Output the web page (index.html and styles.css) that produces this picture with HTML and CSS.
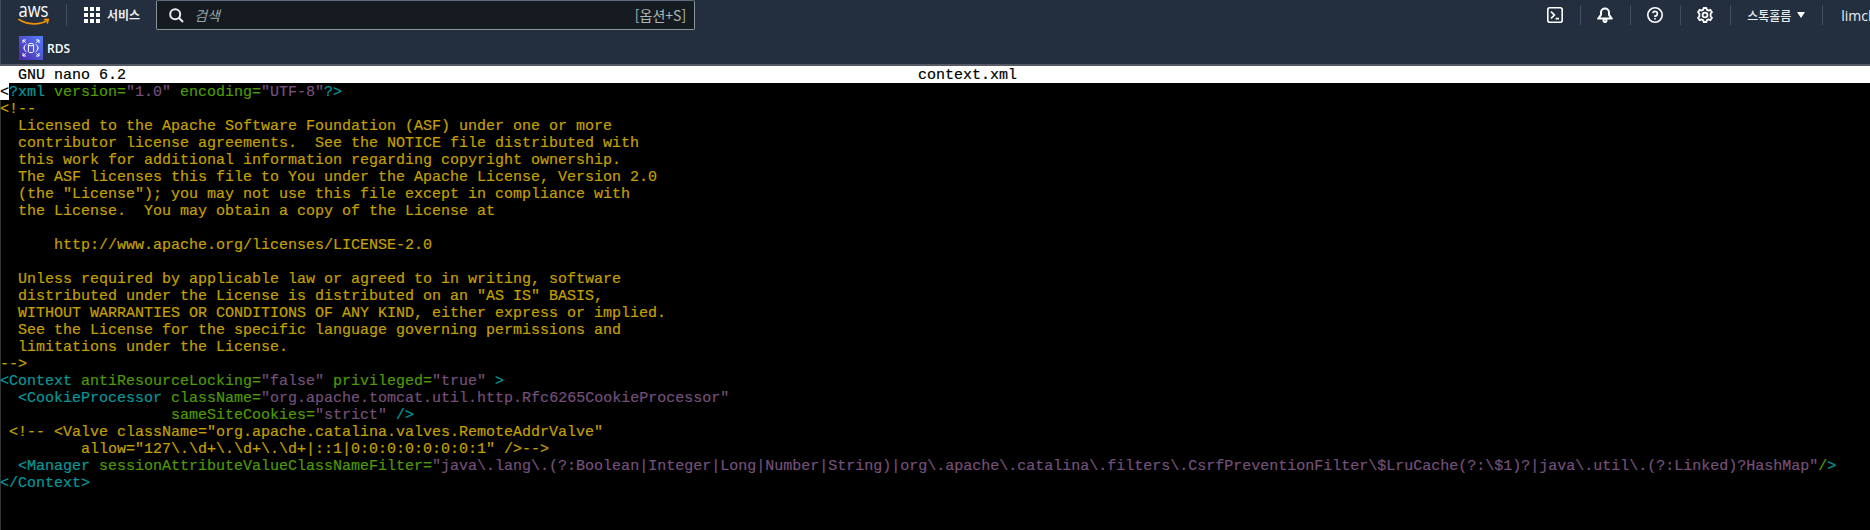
FILE: index.html
```html
<!DOCTYPE html>
<html lang="ko">
<head>
<meta charset="utf-8">
<title>context.xml - RDS</title>
<link rel="stylesheet" href="styles.css">
</head>
<body>
<header class="console-header">
  <div class="top-row">
    <svg class="aws-logo" width="32" height="21" viewBox="0 0 32 21" aria-label="aws">
      <text class="aws-text" x="0.5" y="11.5" textLength="30" lengthAdjust="spacingAndGlyphs">aws</text>
      <path d="M1 14.6C9 20 21.5 20.4 29 15.6" fill="none" stroke="#f29100" stroke-width="1.8" stroke-linecap="round"/>
      <path d="M25.8 14.6L30.4 14.2L29.2 18.6" fill="none" stroke="#f29100" stroke-width="1.5" stroke-linejoin="round"/>
    </svg>
    <span class="divider logo-divider"></span>
    <svg class="grid-icon" width="16" height="16" viewBox="0 0 16 16" fill="#fff">
      <rect width="4" height="4"/><rect x="6" width="4" height="4"/><rect x="12" width="4" height="4"/>
      <rect y="6" width="4" height="4"/><rect x="6" y="6" width="4" height="4"/><rect x="12" y="6" width="4" height="4"/>
      <rect y="12" width="4" height="4"/><rect x="6" y="12" width="4" height="4"/><rect x="12" y="12" width="4" height="4"/>
    </svg>
    <span class="services">서비스</span>
    <div class="search">
      <svg width="15" height="15" viewBox="0 0 15 15" fill="none" stroke="#e9ebed" stroke-width="2"><circle cx="6.2" cy="6.2" r="5"/><path d="M9.8 9.8L14 14"/></svg>
      <span class="search-placeholder">검색</span>
      <span class="search-key">[옵션+S]</span>
    </div>
    <nav class="tools">
      <svg width="16" height="16" viewBox="0 0 16 16" fill="none" stroke="#fff" stroke-width="1.6"><rect x=".8" y=".8" width="14.4" height="14.4" rx="2"/><path d="M4 4.6L7.4 8L4 11.4M8.6 11.6H12"/></svg>
      <span class="divider"></span>
      <svg width="16" height="16" viewBox="0 0 16 16" fill="none" stroke="#fff" stroke-width="2"><path d="M1.2 11.6H14.8L12 7.8V5.6A4 4 0 0 0 4 5.6V7.8Z" stroke-linejoin="round"/><circle cx="8" cy="13.6" r="1.5"/></svg>
      <span class="divider"></span>
      <svg width="16" height="16" viewBox="0 0 16 16" fill="none" stroke="#fff" stroke-width="1.6"><circle cx="8" cy="8" r="7.2"/><path d="M5.8 6.2A2.3 2.3 0 1 1 8 9V10"/><path d="M8 11V12.6"/></svg>
      <span class="divider"></span>
      <svg width="16" height="16" viewBox="0 0 16 16" fill="none" stroke="#fff" stroke-width="1.8"><circle cx="8" cy="8" r="2.4"/><path d="M6.6 1H9.4L9.9 2.9L11.6 3.6L13.3 2.7L15 5.2L13.6 6.6V9.4L15 10.8L13.3 13.3L11.6 12.4L9.9 13.1L9.4 15H6.6L6.1 13.1L4.4 12.4L2.7 13.3L1 10.8L2.4 9.4V6.6L1 5.2L2.7 2.7L4.4 3.6L6.1 2.9Z" stroke-linejoin="round"/></svg>
      <span class="divider"></span>
      <span class="region">스톡홀름</span>
      <svg class="caret" width="8" height="6" viewBox="0 0 8 6" fill="#fff"><path d="M0 0H8L4 6Z"/></svg>
      <span class="divider"></span>
      <span class="user">limchanho</span>
    </nav>
  </div>
  <div class="service-row">
    <svg width="24" height="24" viewBox="0 0 24 24">
      <defs><linearGradient id="rds" x1="0" y1="1" x2="1" y2="0"><stop offset="0" stop-color="#4d27a8"/><stop offset="1" stop-color="#527fff"/></linearGradient></defs>
      <rect width="24" height="24" fill="url(#rds)"/>
      <g fill="none" stroke="#fff" stroke-width="1">
        <ellipse cx="12" cy="8.6" rx="2.6" ry="1.2"/>
        <path d="M9.4 8.6V15.4C9.4 16.2 10.6 16.6 12 16.6S14.6 16.2 14.6 15.4V8.6"/>
        <path d="M7.4 8.2L5.4 10V11.6L4.4 12L5.4 12.4V14L7.4 15.8M16.6 8.2L18.6 10V11.6L19.6 12L18.6 12.4V14L16.6 15.8"/>
        <path d="M4 7V4H7M4 4L6.6 6.6M20 7V4H17M20 4L17.4 6.6M4 17V20H7M4 20L6.6 17.4M20 17V20H17M20 20L17.4 17.4"/>
      </g>
    </svg>
    <span class="service-name">RDS</span>
  </div>
</header>
<main class="terminal">
  <div class="nano-title"><span class="nano-version">GNU nano 6.2</span><span class="nano-file">context.xml</span></div>
  <pre class="nano-buffer"><span class="cursor">&lt;</span><span class="t">?xml</span><span class="g"> version=</span><span class="p">"1.0"</span><span class="g"> encoding=</span><span class="p">"UTF-8"</span><span class="t">?&gt;</span>
<span class="y">&lt;!--
  Licensed to the Apache Software Foundation (ASF) under one or more
  contributor license agreements.  See the NOTICE file distributed with
  this work for additional information regarding copyright ownership.
  The ASF licenses this file to You under the Apache License, Version 2.0
  (the "License"); you may not use this file except in compliance with
  the License.  You may obtain a copy of the License at

      http://www.apache.org/licenses/LICENSE-2.0

  Unless required by applicable law or agreed to in writing, software
  distributed under the License is distributed on an "AS IS" BASIS,
  WITHOUT WARRANTIES OR CONDITIONS OF ANY KIND, either express or implied.
  See the License for the specific language governing permissions and
  limitations under the License.
--&gt;</span>
<span class="t">&lt;Context</span><span class="g"> antiResourceLocking=</span><span class="p">"false"</span><span class="g"> privileged=</span><span class="p">"true"</span><span class="t"> &gt;</span>
  <span class="t">&lt;CookieProcessor</span><span class="g"> className=</span><span class="p">"org.apache.tomcat.util.http.Rfc6265CookieProcessor"</span>
                   <span class="g">sameSiteCookies=</span><span class="p">"strict"</span><span class="t"> /&gt;</span>
<span class="y"> &lt;!-- &lt;Valve className="org.apache.catalina.valves.RemoteAddrValve"
         allow="127\.\d+\.\d+\.\d+|::1|0:0:0:0:0:0:0:1" /&gt;--&gt;</span>
  <span class="t">&lt;Manager</span><span class="g"> sessionAttributeValueClassNameFilter=</span><span class="p">"java\.lang\.(?:Boolean|Integer|Long|Number|String)|org\.apache\.catalina\.filters\.CsrfPreventionFilter\$LruCache(?:\$1)?|java\.util\.(?:Linked)?HashMap"</span><span class="g">/</span><span class="t">&gt;</span>
<span class="t">&lt;/Context&gt;</span></pre>
</main>
</body>
</html>
```
FILE: styles.css
```css
html, body {
  margin: 0;
  padding: 0;
  height: 530px;
  overflow: hidden;
  background: #000;
}

.console-header {
  height: 64px;
  background: #232f3e;
  border-bottom: 2px solid #545b64;
  box-shadow: inset 1px 0 0 #414d5c;
  font-family: "Open Sans", "Noto Sans CJK KR", sans-serif;
  color: #fff;
}

.top-row {
  display: flex;
  align-items: center;
  height: 32px;
  padding-left: 18px;
}

.aws-logo { flex: none; margin-top: -2px; overflow: visible; }
.aws-text { font: 400 20px "Open Sans", sans-serif; fill: #fff; }

.divider {
  flex: none;
  width: 1px;
  height: 22px;
  background: #414d5c;
  margin-top: -2px;
}
.logo-divider { margin-left: 16px; }

.grid-icon { flex: none; margin-left: 17px; margin-top: -2px; }

.services {
  flex: none;
  margin-left: 7px;
  margin-top: -4px;
  font: 700 12px "Noto Sans CJK KR", sans-serif;
  color: #eaeded;
}

.search {
  flex: none;
  box-sizing: border-box;
  width: 539px;
  height: 30px;
  margin: -2px 0 0 16px;
  display: flex;
  align-items: center;
  padding: 0 8px 0 12px;
  background: #161b22;
  border: 1px solid #879596;
  border-top-color: #5f6b7a;
  border-radius: 2px;
}

.search-placeholder {
  margin-left: 10px;
  font: italic 400 14px "Noto Sans CJK KR", sans-serif;
  color: #95a5a6;
}

.search-key {
  margin-left: auto;
  font: 400 14px "Noto Sans CJK KR", sans-serif;
  color: #aab7b8;
}

.tools {
  flex: none;
  width: 323px;
  margin: -2px 0 0 852px;
  display: flex;
  align-items: center;
  gap: 16.5px;
  overflow: hidden;
}
.tools > svg, .tools > span { flex: none; }
.region { font: 500 12px "Noto Sans CJK KR", sans-serif; color: #eaeded; }
.caret { margin-left: -10.5px; }
.user { font: 400 14px "Open Sans", sans-serif; color: #eaeded; margin-left: 2px; }

.service-row {
  display: flex;
  align-items: center;
  height: 32px;
  padding-left: 19px;
  gap: 4px;
}
.service-name { font: 600 12px "Open Sans", sans-serif; color: #fff; }

.terminal {
  font: 15px/17px "Liberation Mono", monospace;
  color: #fff;
  margin: 0;
  -webkit-text-stroke: 0.2px;
}

.nano-title {
  box-sizing: border-box;
  display: flex;
  height: 17px;
  padding: 1px 0 0 18px;
  background: #fff;
  color: #000;
  white-space: pre;
}
.nano-file { margin-left: 792px; }

.nano-buffer {
  margin: 0;
  padding-top: 1px;
  height: 446px;
  font: inherit;
  white-space: pre;
  background: #000;
  box-shadow: inset 1px 0 0 #333;
}

.cursor {
  background: linear-gradient(#fff 16px, transparent 16px);
  box-shadow: 0 -1px 0 #fff;
  color: #000;
}
.t { color: #06989a; }
.g { color: #4e9a06; }
.p { color: #75507b; }
.y { color: #c4a000; }
```
